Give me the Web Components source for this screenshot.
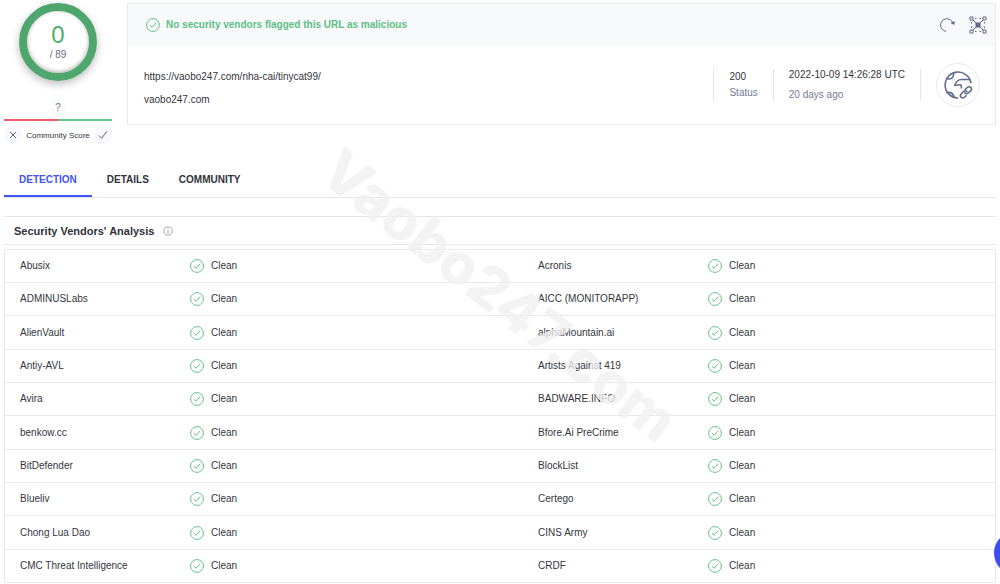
<!DOCTYPE html>
<html lang="en">
<head>
<meta charset="utf-8">
<meta name="viewport" content="width=device-width, initial-scale=1">
<title>URL report</title>
<style>
html { background: #fff; }
body { margin: 0; font: 10px/16px "Liberation Sans", Arial, sans-serif; color: #33363d; }
</style>
</head>
<body>
<report-page></report-page>
<script>
const define = (name, html, setup) => {
  const template = document.createElement('template');
  template.innerHTML = html;
  customElements.define(name, class extends HTMLElement {
    constructor() {
      super();
      this.attachShadow({ mode: 'open' }).append(template.content.cloneNode(true));
    }
    connectedCallback() { if (setup) setup(this, this.shadowRoot); }
  });
};

define('check-mark', `
<style>
:host { display: block; width: 14px; height: 14px; color: #63c189; }
svg { display: block; width: 100%; height: 100%; }
</style>
<svg viewBox="0 0 14 14" fill="none" stroke="currentColor" aria-hidden="true">
  <circle cx="7" cy="7" r="6.4"/><path d="M4 7.3 6.1 9.3 10.2 4.6"/>
</svg>`);

define('score-ring', `
<style>
:host { display: flex; flex-direction: column; align-items: center; justify-content: center;
  box-sizing: border-box; width: 78px; height: 78px; border: 8px solid #4ea66d; border-radius: 50%;
  box-shadow: 0 3px 8px #0004, inset 0 -1px 4px #0005; }
.value { font-size: 24px; line-height: 26px; color: #4caf6e; }
.total { font-size: 10px; line-height: 14px; color: #66708e; }
</style>
<span class="value"><slot></slot></span>
<span class="total"><slot name="total"></slot></span>`);

define('community-score', `
<style>
:host { display: flex; flex-direction: column; align-items: center; width: 108px; }
.unknown { width: 18px; height: 18px; margin-top: 18px; border-radius: 50%; background: #fafbfd;
  color: #777c88; font-size: 10px; line-height: 18px; text-align: center; }
.bar { display: flex; width: 100%; height: 2px; margin-top: 2px; }
.bar span { flex: 1; background: #f05c6f; }
.bar span + span { background: #67c38b; }
.votes { display: flex; align-items: center; justify-content: space-between; width: 100%; margin-top: 4px; }
.votes span { padding-top: 2px; font-size: 8px; line-height: 18px; color: #33363d; }
button { display: flex; align-items: center; justify-content: center; width: 18px; height: 18px;
  padding: 0; border: 0; border-radius: 50%; background: #f7f9fc; color: #5d678a; }
svg { width: 10px; height: 10px; fill: none; stroke: currentColor; }
</style>
<score-ring>0<span slot="total">/ 89</span></score-ring>
<div class="unknown">?</div>
<div class="bar"><span></span><span></span></div>
<div class="votes">
  <button aria-label="Vote malicious"><svg viewBox="0 0 10 10"><path d="m2 2 6 6M8 2 2 8"/></svg></button>
  <span>Community Score</span>
  <button aria-label="Vote harmless"><svg viewBox="0 0 10 10"><path d="m1 5.5 2.6 2.7L9 1.2"/></svg></button>
</div>`);

define('url-summary', `
<style>
:host { display: block; box-sizing: border-box; border: 1px solid #e8e9eb; background: #fff; }
header { display: flex; align-items: center; gap: 6px; height: 42px; padding: 0 8px 0 18px; background: #f7f9fb; }
h1 { flex: 1; margin: 0; font-size: 10px; line-height: 16px; color: #5fbf84; }
button { display: block; padding: 0; border: 0; background: none; color: #5d668b; }
header button + button { margin-left: 7px; }
button svg { display: block; width: 18px; height: 18px; }
.body { display: flex; align-items: center; height: 78px; padding: 0 15px 0 16px; }
.url { flex: 1; padding-top: 6px; }
p { margin: 0; line-height: 16px; }
.url p + p { margin-top: 7px; }
.fact { display: flex; flex-direction: column; justify-content: center; box-sizing: border-box;
  height: 32px; padding: 0 15px; border-left: 1px solid #e3e5e9; }
.fact .sub { color: #717b98; }
.date p + p { margin-top: 4px; }
.kind { box-sizing: border-box; padding-left: 15px; border-left: 1px solid #e3e5e9; height: 32px;
  display: flex; align-items: center; }
.disc { display: flex; align-items: center; justify-content: center; box-sizing: border-box;
  width: 44px; height: 44px; border: 1px solid #e6e8eb; border-radius: 50%; color: #626d8c; }
.disc svg { width: 30px; height: 30px; }
</style>
<header>
  <check-mark></check-mark>
  <h1>No security vendors flagged this URL as malicious</h1>
  <button aria-label="Reanalyze"><svg viewBox="0 0 18 18" fill="none" stroke="currentColor">
    <path d="M8 15.3A6.3 6.3 0 1 1 15 7.5"/><path d="m12.4 7 3.8 2 .6-4z" fill="currentColor" stroke="none"/></svg></button>
  <button aria-label="Open in graph"><svg viewBox="0 0 18 18" fill="none" stroke="currentColor">
    <path d="M1 1h3v3H1zM14 1h3v3h-3zM1 14h3v3H1zM14 14h3v3h-3z"/>
    <path d="M6 2.5h6M6 15.5h6M2.5 6v6M15.5 6v6" stroke-dasharray="1.5 3"/>
    <path d="m4 4 10 10M14 4 4 14"/><path d="M7 7h4v4H7z" fill="currentColor"/></svg></button>
</header>
<div class="body">
  <div class="url"><p>https://vaobo247.com/nha-cai/tinycat99/</p><p>vaobo247.com</p></div>
  <div class="fact"><p>200</p><p class="sub">Status</p></div>
  <div class="fact date"><p>2022-10-09 14:26:28 UTC</p><p class="sub">20 days ago</p></div>
  <div class="kind"><div class="disc"><svg viewBox="0 0 30 30" fill="none" stroke="currentColor" stroke-width="1.6" stroke-linecap="round" stroke-linejoin="round" aria-hidden="true">
    <path d="M14.5 28A13 13 0 1 1 27.9 12.5"/>
    <path d="M3.8 8.4c2 1.2 5.2.4 6.1-1.6.4-1.2 1.2-2 .5-4"/>
    <path d="M4 22.5c3.4-.4 6.2 1 7.2 4.8"/>
    <path d="M27 9.5h-8.7c-2.8 0-5.4 2.6-6.7 6l5.2-.7c1.9-.2 1.6 1.6 1.5 3.1"/>
    <path d="M22.2 19.5 24 17.7c1.4-1.4 3-1.2 3.8-.3 1 1 .8 2.4-.3 3.5l-2.2 2.1c-1.1 1-2.5.9-3.4-.1"/>
    <path d="M24 21.6c-1-1.1-2.4-1.2-3.5-.1l-2.2 2.2c-1.2 1.2-1.1 2.6-.2 3.5.9.9 2.5.9 3.6-.2l1.3-1.3"/>
  </svg></div></div>
</div>`);

define('report-tabs', `
<style>
:host { display: block; border-bottom: 1px solid #e5e6e8; }
nav { display: flex; }
a { box-sizing: border-box; height: 36px; padding: 11px 15px 0; border-bottom: 2px solid transparent;
  font-size: 10px; line-height: 16px; font-weight: 700; color: #30333a; text-decoration: none; }
a[aria-current] { color: #4254f2; border-color: #4254f2; }
</style>
<nav><a href="#detection" aria-current="page">DETECTION</a><a href="#details">DETAILS</a><a href="#community">COMMUNITY</a></nav>`);

define('section-title', `
<style>
:host { display: flex; align-items: center; gap: 9px; box-sizing: border-box; height: 29px; padding: 0 10px;
  border: solid #e5e6e8; border-width: 1px 0; }
h2 { margin: 0; font-size: 11px; line-height: 16px; color: #30333a; }
svg { width: 10px; height: 10px; fill: none; stroke: #8b91a4; }
</style>
<h2><slot></slot></h2>
<svg viewBox="0 0 10 10" aria-hidden="true"><circle cx="5" cy="5" r="4.2" stroke-width=".8"/><path d="M5 4.3v3.1M5 2.4v1" stroke-width=".9"/></svg>`);

define('scan-verdict', `
<style>
:host { display: flex; align-items: center; gap: 7px; }
</style>
<check-mark></check-mark><span><slot></slot></span>`);

const vendors = [
  ['Abusix', 'Acronis'], ['ADMINUSLabs', 'AICC (MONITORAPP)'], ['AlienVault', 'alphaMountain.ai'],
  ['Antiy-AVL', 'Artists Against 419'], ['Avira', 'BADWARE.INFO'], ['benkow.cc', 'Bfore.Ai PreCrime'],
  ['BitDefender', 'BlockList'], ['Blueliv', 'Certego'], ['Chong Lua Dao', 'CINS Army'],
  ['CMC Threat Intelligence', 'CRDF'],
];

define('vendor-table', `
<style>
:host { display: block; border: 1px solid #e7e8ea; border-bottom: 0; }
table { width: 100%; border-collapse: separate; border-spacing: 0; table-layout: fixed; }
.name { width: 170px; }
.last { width: 30.5%; }
td { box-sizing: border-box; height: 33px; padding: 0 0 0 15px; border-bottom: 1px solid #e7e8ea; color: #33363d; }
tr:nth-child(3n) td { height: 34px; }
</style>
<table aria-label="Vendor results">
  <colgroup><col class="name"><col><col class="name"><col class="last"></colgroup>
  <tbody></tbody>
</table>`, (host, root) => {
  const body = root.querySelector('tbody');
  if (body.rows.length) return;
  for (const pair of vendors) {
    const row = body.insertRow();
    for (const vendor of pair) {
      row.insertCell().textContent = vendor;
      const verdict = document.createElement('scan-verdict');
      verdict.textContent = 'Clean';
      row.insertCell().append(verdict);
    }
  }
});

define('page-watermark', `
<style>
:host { position: absolute; left: 50%; top: 295px; transform: translate(-50%, -50%) rotate(38deg);
  pointer-events: none; white-space: nowrap; font: 800 58px/60px Inter, "Open Sans", sans-serif;
  color: rgba(240, 240, 240, .78); }
</style>
<slot></slot>`);

define('chat-button', `
<style>
:host { position: fixed; right: -38px; bottom: 9px; }
button { display: block; width: 44px; height: 44px; padding: 0; border: 0; border-radius: 50%; background: #3b4ef0; }
</style>
<button aria-label="Open chat"></button>`);

define('report-page', `
<style>
:host { display: block; position: relative; overflow: hidden; padding: 3px 4px 0; }
.top { display: flex; gap: 15px; }
url-summary { flex: 1; align-self: flex-start; }
report-tabs { margin-top: 16px; }
section-title { margin-top: 18px; }
vendor-table { margin-top: 4px; }
</style>
<div class="top"><community-score></community-score><url-summary></url-summary></div>
<report-tabs></report-tabs>
<section-title>Security Vendors' Analysis</section-title>
<vendor-table></vendor-table>
<page-watermark>Vaobo247.com</page-watermark>
<chat-button></chat-button>`);
</script>
</body>
</html>
